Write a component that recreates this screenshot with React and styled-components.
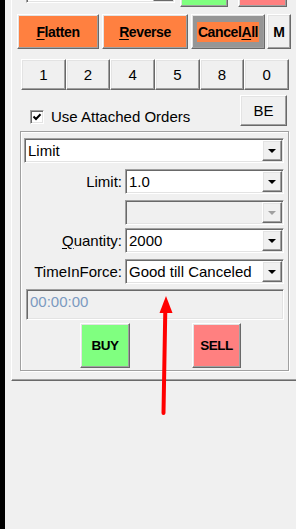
import React from "react";
import styled, { createGlobalStyle, css } from "styled-components";

const Global = createGlobalStyle`
  html, body { margin: 0; padding: 0; background: #f0f0f0; }
  body { font-family: "Liberation Sans", Arial, sans-serif; font-size: 15px; color: #000; }
  * { box-sizing: border-box; }
`;

const raised = css`
  border: 1px solid;
  border-color: #fff #696969 #696969 #fff;
  box-shadow: inset -1px -1px 0 #a0a0a0, inset 1px 1px 0 #e3e3e3;
`;

const sunken = css`
  border: 1px solid;
  border-color: #a0a0a0 #fff #fff #a0a0a0;
  box-shadow: inset 1px 1px 0 #696969, inset -1px -1px 0 #e3e3e3;
`;

const Page = styled.div`
  position: relative;
  display: flex;
  width: 296px;
  height: 529px;
  overflow: hidden;
  background: #f0f0f0;
`;

const LeftEdge = styled.div`
  width: 5px;
  flex: none;
  background: #000;
`;

const Main = styled.div`
  flex: 1;
  padding-left: 6px;
`;

const Frame = styled.div`
  border-left: 1px solid #fff;
  border-bottom: 1px solid #696969;
  box-shadow: inset 0 -1px 0 #a0a0a0;
  padding-bottom: 9px;
`;

const TopStrip = styled.div`
  display: flex;
  align-items: flex-end;
  height: 7px;
  overflow: hidden;
`;

const StubSlot = styled.div`
  margin: 0 0 4px 14px;
  flex: none;
`;

const ColorTab = styled.div`
  ${raised};
  flex: none;
  width: ${(p) => p.$w}px;
  height: 30px;
  margin-left: ${(p) => p.$ml}px;
  background: ${(p) => p.$bg};
`;

const ActionRow = styled.div`
  display: flex;
  margin-top: 7px;
  padding-left: 5px;
  height: 35px;
`;

const ActionButton = styled.div`
  ${raised};
  flex: none;
  width: ${(p) => p.$w}px;
  margin-left: ${(p) => p.$ml || 0}px;
  background: ${(p) => p.$bg};
  display: flex;
  align-items: center;
  justify-content: center;
  font-weight: bold;
  font-size: 14px;
  letter-spacing: -0.4px;
  white-space: nowrap;
  u { text-underline-offset: 2px; }
`;

const Highlight = styled.span`
  background: #ff8040;
  padding: 2px 1px;
`;

const NumRow = styled.div`
  display: grid;
  grid-template-columns: repeat(6, 1fr);
  width: 268px;
  height: 31px;
  margin: 10px 0 0 9px;
`;

const NumButton = styled.div`
  ${raised};
  background: #f0f0f0;
  display: flex;
  align-items: center;
  justify-content: center;
  font-size: 15px;
`;

const CheckRow = styled.div`
  display: flex;
  align-items: flex-start;
  height: 31px;
  margin-top: 5px;
`;

const CheckLabel = styled.label`
  display: flex;
  align-items: center;
  gap: 7px;
  margin: 13px 0 0 18px;
  font-size: 15px;
  white-space: nowrap;
`;

const CheckBox = styled.span`
  ${sunken};
  width: 14px;
  height: 14px;
  background: #fff;
  display: flex;
  align-items: center;
  justify-content: center;
`;

const SmallButton = styled.div`
  ${raised};
  margin-left: auto;
  margin-right: 9px;
  width: 47px;
  height: 31px;
  background: #f0f0f0;
  display: flex;
  align-items: center;
  justify-content: center;
  font-size: 15px;
`;

const Group = styled.div`
  width: 269px;
  height: 240px;
  margin: 5px 0 0 8px;
  padding-top: 6px;
  border: 1px solid #a0a0a0;
  box-shadow: 1px 1px 0 #fff, inset 1px 1px 0 #fff;
`;

const ComboBox = styled.div`
  ${sunken};
  display: flex;
  width: ${(p) => p.$w}px;
  height: 25px;
  padding: 1px;
  margin-left: ${(p) => p.$ml || 0}px;
  background: ${(p) => (p.$disabled ? "#f0f0f0" : "#fff")};
  flex: none;
`;

const ComboText = styled.div`
  flex: 1;
  display: flex;
  align-items: center;
  padding-left: 2px;
  font-size: 15px;
  white-space: nowrap;
  overflow: hidden;
`;

const DropButton = styled.div`
  ${raised};
  width: 20px;
  flex: none;
  background: #f0f0f0;
  display: flex;
  align-items: center;
  justify-content: center;
`;

const FieldRow = styled.div`
  display: flex;
  align-items: center;
  gap: 3px;
  margin: ${(p) => p.$mt}px 0 0 3px;
`;

const FieldLabel = styled.div`
  width: 98px;
  text-align: right;
  font-size: 15px;
  white-space: nowrap;
  u { text-underline-offset: 2px; }
`;

const TimeBox = styled.div`
  ${sunken};
  width: 258px;
  height: 31px;
  margin: 5px 0 0 5px;
  padding: 3px 0 0 3px;
  background: #f0f0f0;
  color: #7b9ac0;
  font-size: 15px;
`;

const TradeRow = styled.div`
  display: flex;
  margin-top: 3px;
  padding-left: 59px;
`;

const TradeButton = styled.div`
  ${raised};
  width: ${(p) => p.$w}px;
  height: 45px;
  margin-left: ${(p) => p.$ml || 0}px;
  background: ${(p) => p.$bg};
  display: flex;
  align-items: center;
  justify-content: center;
  font-weight: bold;
  font-size: 13.5px;
  letter-spacing: -0.5px;
`;

const Overlay = styled.svg`
  position: absolute;
  left: 0;
  top: 0;
  pointer-events: none;
`;

const Arrow = ({ disabled }) => (
  <svg width="8" height="4" viewBox="0 0 8 4">
    <path d="M0 0H8L4 4Z" fill={disabled ? "#a0a0a0" : "#000"} />
  </svg>
);

const Combo = ({ w, ml, value, disabled }) => (
  <ComboBox $w={w} $ml={ml} $disabled={disabled}>
    <ComboText>{value}</ComboText>
    <DropButton>
      <Arrow disabled={disabled} />
    </DropButton>
  </ComboBox>
);

export default function App() {
  return (
    <Page>
      <Global />
      <LeftEdge />
      <Main>
        <Frame>
          <TopStrip>
            <StubSlot>
              <Combo w={149} value="" />
            </StubSlot>
            <ColorTab $w={48} $ml={5} $bg="#80ff80" />
            <ColorTab $w={49} $ml={10} $bg="#ff8080" />
          </TopStrip>

          <ActionRow>
            <ActionButton $w={82} $bg="#ff8040">
              <span><u>F</u>latten</span>
            </ActionButton>
            <ActionButton $w={86} $ml={3} $bg="#ff8040">
              <span><u>R</u>everse</span>
            </ActionButton>
            <ActionButton $w={74} $ml={3} $bg="#969696">
              <Highlight>Cancel<u>A</u>ll</Highlight>
            </ActionButton>
            <ActionButton $w={24} $ml={2} $bg="#f0f0f0">M</ActionButton>
          </ActionRow>

          <NumRow>
            {["1", "2", "4", "5", "8", "0"].map((n) => (
              <NumButton key={n}>{n}</NumButton>
            ))}
          </NumRow>

          <CheckRow>
            <CheckLabel>
              <CheckBox>
                <svg width="10" height="10" viewBox="0 0 10 10">
                  <polyline points="1.5,4.5 4,7 8.5,2.2" fill="none" stroke="#000" strokeWidth="2" />
                </svg>
              </CheckBox>
              Use Attached Orders
            </CheckLabel>
            <SmallButton>BE</SmallButton>
          </CheckRow>

          <Group>
            <Combo w={260} ml={3} value="Limit" />
            <FieldRow $mt={6}>
              <FieldLabel>Limit:</FieldLabel>
              <Combo w={159} value="1.0" />
            </FieldRow>
            <FieldRow $mt={6}>
              <FieldLabel />
              <Combo w={159} value="" disabled />
            </FieldRow>
            <FieldRow $mt={3}>
              <FieldLabel><u>Q</u>uantity:</FieldLabel>
              <Combo w={159} value="2000" />
            </FieldRow>
            <FieldRow $mt={6}>
              <FieldLabel>TimeInForce:</FieldLabel>
              <Combo w={159} value="Good till Canceled" />
            </FieldRow>
            <TimeBox>00:00:00</TimeBox>
            <TradeRow>
              <TradeButton $w={50} $bg="#80ff80">BUY</TradeButton>
              <TradeButton $w={49} $ml={62} $bg="#ff8080">SELL</TradeButton>
            </TradeRow>
          </Group>
        </Frame>
      </Main>

      <Overlay width="296" height="529" viewBox="0 0 296 529">
        <line x1="163.5" y1="413" x2="165.3" y2="310" stroke="#ff0000" strokeWidth="4" strokeLinecap="round" />
        <polygon points="166,296 159.5,313 172.5,313" fill="#ff0000" />
      </Overlay>
    </Page>
  );
}
